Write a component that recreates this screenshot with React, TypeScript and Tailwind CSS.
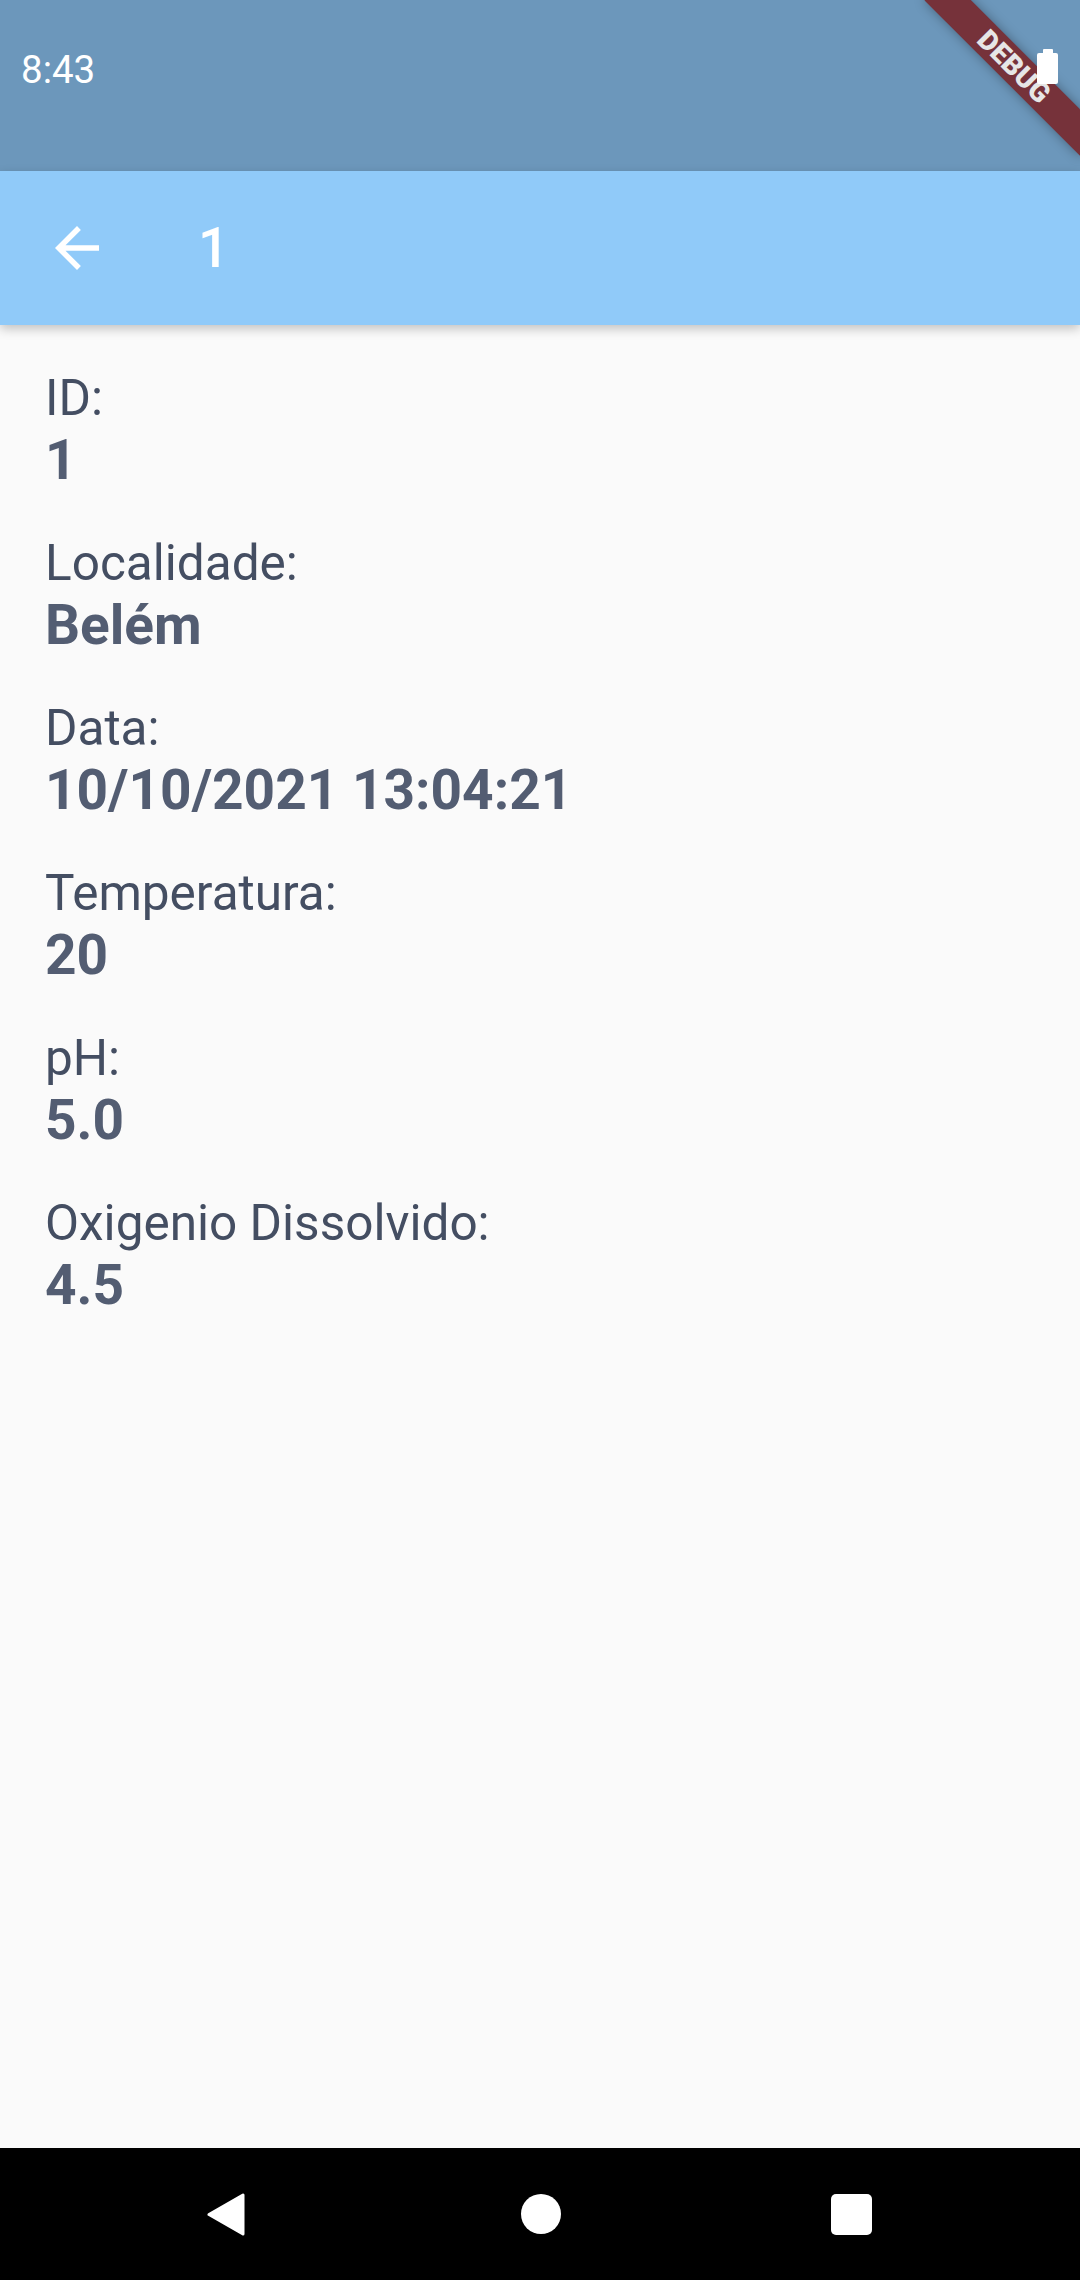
const fields = [
  { label: "ID:", value: "1" },
  { label: "Localidade:", value: "Belém" },
  { label: "Data:", value: "10/10/2021 13:04:21" },
  { label: "Temperatura:", value: "20" },
  { label: "pH:", value: "5.0" },
  { label: "Oxigenio Dissolvido:", value: "4.5" },
];

function Battery() {
  return (
    <div className="flex flex-col items-center mt-[2px]">
      <div className="w-[10px] h-[4px] bg-white rounded-t-[1px]" />
      <div className="w-[21px] h-[31px] bg-white rounded-[2px]" />
    </div>
  );
}

export default function App() {
  return (
    <div className="relative w-[1080px] h-[2280px] flex flex-col overflow-hidden bg-[#fafafa] font-['Roboto',_sans-serif]">

      {/* Status bar */}
      <div className="h-[171px] shrink-0 bg-[#6c97bb] flex items-start justify-between pt-[47px] pl-[21px] pr-[22px]">
        <span className="text-white text-[38.5px] leading-[45px]">8:43</span>
        <div className="relative z-30">
          <Battery />
        </div>
      </div>

      {/* App bar */}
      <div className="relative z-10 h-[154px] shrink-0 bg-[#90caf9] flex items-center shadow-[0_4px_10px_rgba(0,0,0,0.22)]">
        <div className="ml-[44px] w-[66px] h-[66px] flex items-center justify-center">
          <svg viewBox="0 0 24 24" className="w-[66px] h-[66px]" fill="white">
            <path d="M20 11H7.83l5.59-5.59L12 4l-8 8 8 8 1.41-1.41L7.83 13H20v-2z" />
          </svg>
        </div>
        <span className="ml-[88px] text-white text-[55px] leading-[64px] font-medium">1</span>
      </div>

      {/* Content */}
      <div className="flex-1 flex flex-col gap-[41px] pt-[43px] pl-[45px]">
        {fields.map((f) => (
          <div key={f.label} className="flex flex-col">
            <span className="text-[#444e62] text-[49.5px] leading-[60px]">{f.label}</span>
            <span className="text-[#535d72] text-[55px] leading-[64px] font-bold">{f.value}</span>
          </div>
        ))}
      </div>

      {/* Nav bar */}
      <div className="h-[132px] shrink-0 bg-black flex items-center">
        <svg viewBox="0 0 38 43" className="ml-[207px] w-[38px] h-[43px]">
          <polygon points="2,21.5 36,2 36,41" fill="white" stroke="white" strokeWidth="3" strokeLinejoin="round" />
        </svg>
        <div className="ml-[276px] w-[40px] h-[40px] rounded-full bg-white" />
        <div className="ml-[270px] w-[41px] h-[41px] rounded-[5px] bg-white" />
      </div>

      {/* Debug banner */}
      <div className="absolute z-20 left-[904px] top-[50px] w-[220px] h-[33px] rotate-45 bg-[#76323a] shadow-[0_0_12px_rgba(0,0,0,0.35)] flex items-center justify-center">
        <span className="text-[#e6e6e6] text-[28px] leading-[28px] font-black">DEBUG</span>
      </div>
    </div>
  );
}
